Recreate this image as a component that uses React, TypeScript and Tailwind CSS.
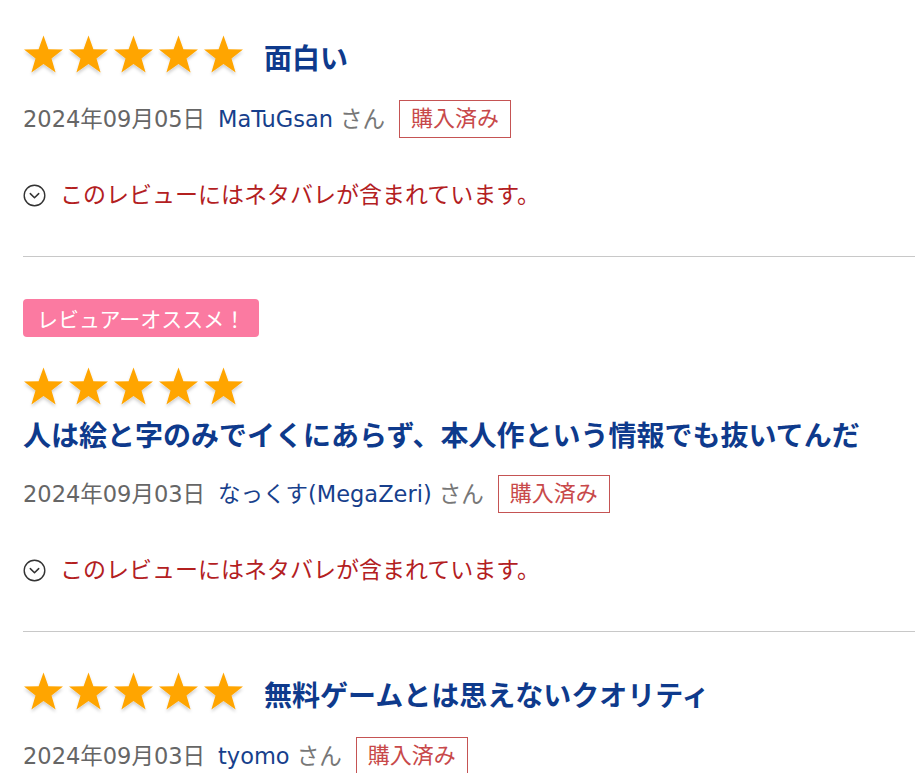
import React from "react";

const FONT = { fontFamily: '"DejaVu Sans", "Noto Sans CJK JP", sans-serif' };
const TITLE_FONT = { fontFamily: '"Noto Sans CJK JP", "DejaVu Sans", sans-serif' };

function Star() {
  return (
    <svg width="45" height="42" viewBox="0 0 45 42" className="shrink-0">
      <defs>
        <filter id="sh" x="-20%" y="-20%" width="140%" height="150%">
          <feDropShadow dx="0" dy="2.5" stdDeviation="1.5" floodColor="#000" floodOpacity="0.18" />
        </filter>
      </defs>
      <polygon
        filter="url(#sh)"
        fill="#ffa500"
        points="20.5,0.5 25.4,14.2 40,14.5 28.5,23.4 32.6,37.5 20.5,29 8.4,37.5 12.5,23.4 1,14.5 15.6,14.2"
      />
    </svg>
  );
}

function Stars() {
  return (
    <div className="flex shrink-0">
      <Star />
      <Star />
      <Star />
      <Star />
      <Star />
    </div>
  );
}

function SpoilerIcon() {
  return (
    <svg width="23" height="23" viewBox="0 0 23 23" className="shrink-0">
      <circle cx="11.5" cy="11.5" r="10.3" fill="none" stroke="#333" strokeWidth="1.4" />
      <polyline points="7.3,9.6 11.5,13.8 15.7,9.6" fill="none" stroke="#333" strokeWidth="1.5" strokeLinecap="round" strokeLinejoin="round" />
    </svg>
  );
}

function Meta({ date, name }: { date: string; name: string }) {
  return (
    <div className="flex items-center h-[38px] text-[22.5px] leading-none" style={FONT}>
      <span className="text-[#666666]">{date}</span>
      <span className="ml-[13px] text-[#173f8c]">{name}</span>
      <span className="ml-[7px] text-[#777777]">さん</span>
      <span className="ml-[14px] h-[38px] border border-[#c55454] text-[#c8494a] px-[11px] leading-[36px] text-[22px]">購入済み</span>
    </div>
  );
}

function Spoiler() {
  return (
    <div className="flex items-center gap-[14px] mt-[46px] h-[23px]" style={FONT}>
      <SpoilerIcon />
      <span className="text-[23px] leading-none text-[#b3201f]">このレビューにはネタバレが含まれています。</span>
    </div>
  );
}

export default function App() {
  return (
    <div className="bg-white w-[915px] h-[773px] overflow-hidden pl-[23px]">
      {/* Review 1 */}
      <div className="pt-[35px] pb-[49px] border-b border-[#c8c8c8]">
        <div className="flex items-center h-[42px]">
          <Stars />
          <h2 className="ml-[16px] text-[28px] font-bold leading-none text-[#0e3a8c] mt-[2px]" style={TITLE_FONT}>面白い</h2>
        </div>
        <div className="mt-[23px]">
          <Meta date="2024年09月05日" name="MaTuGsan" />
        </div>
        <Spoiler />
      </div>

      {/* Review 2 */}
      <div className="pt-[42px] pb-[49px] border-b border-[#c8c8c8]">
        <div className="flex">
          <span className="bg-[#fb7aa1] text-white text-[21px] leading-[38px] h-[38px] px-[14px] rounded-[4px]" style={TITLE_FONT}>
            レビュアーオススメ！
          </span>
        </div>
        <div className="mt-[30px]">
          <Stars />
        </div>
        <h2 className="text-[28px] font-bold leading-[40px] text-[#0e3a8c] mt-[5px] whitespace-nowrap" style={TITLE_FONT}>
          人は絵と字のみでイくにあらず、本人作という情報でも抜いてんだ
        </h2>
        <div className="mt-[21px]">
          <Meta date="2024年09月03日" name="なっくす(MegaZeri)" />
        </div>
        <Spoiler />
      </div>

      {/* Review 3 */}
      <div className="pt-[40px]">
        <div className="flex items-center h-[42px]">
          <Stars />
          <h2 className="ml-[16px] text-[28px] font-bold leading-none text-[#0e3a8c] mt-[2px]" style={TITLE_FONT}>無料ゲームとは思えないクオリティ</h2>
        </div>
        <div className="mt-[23px]">
          <Meta date="2024年09月03日" name="tyomo" />
        </div>
      </div>
    </div>
  );
}
